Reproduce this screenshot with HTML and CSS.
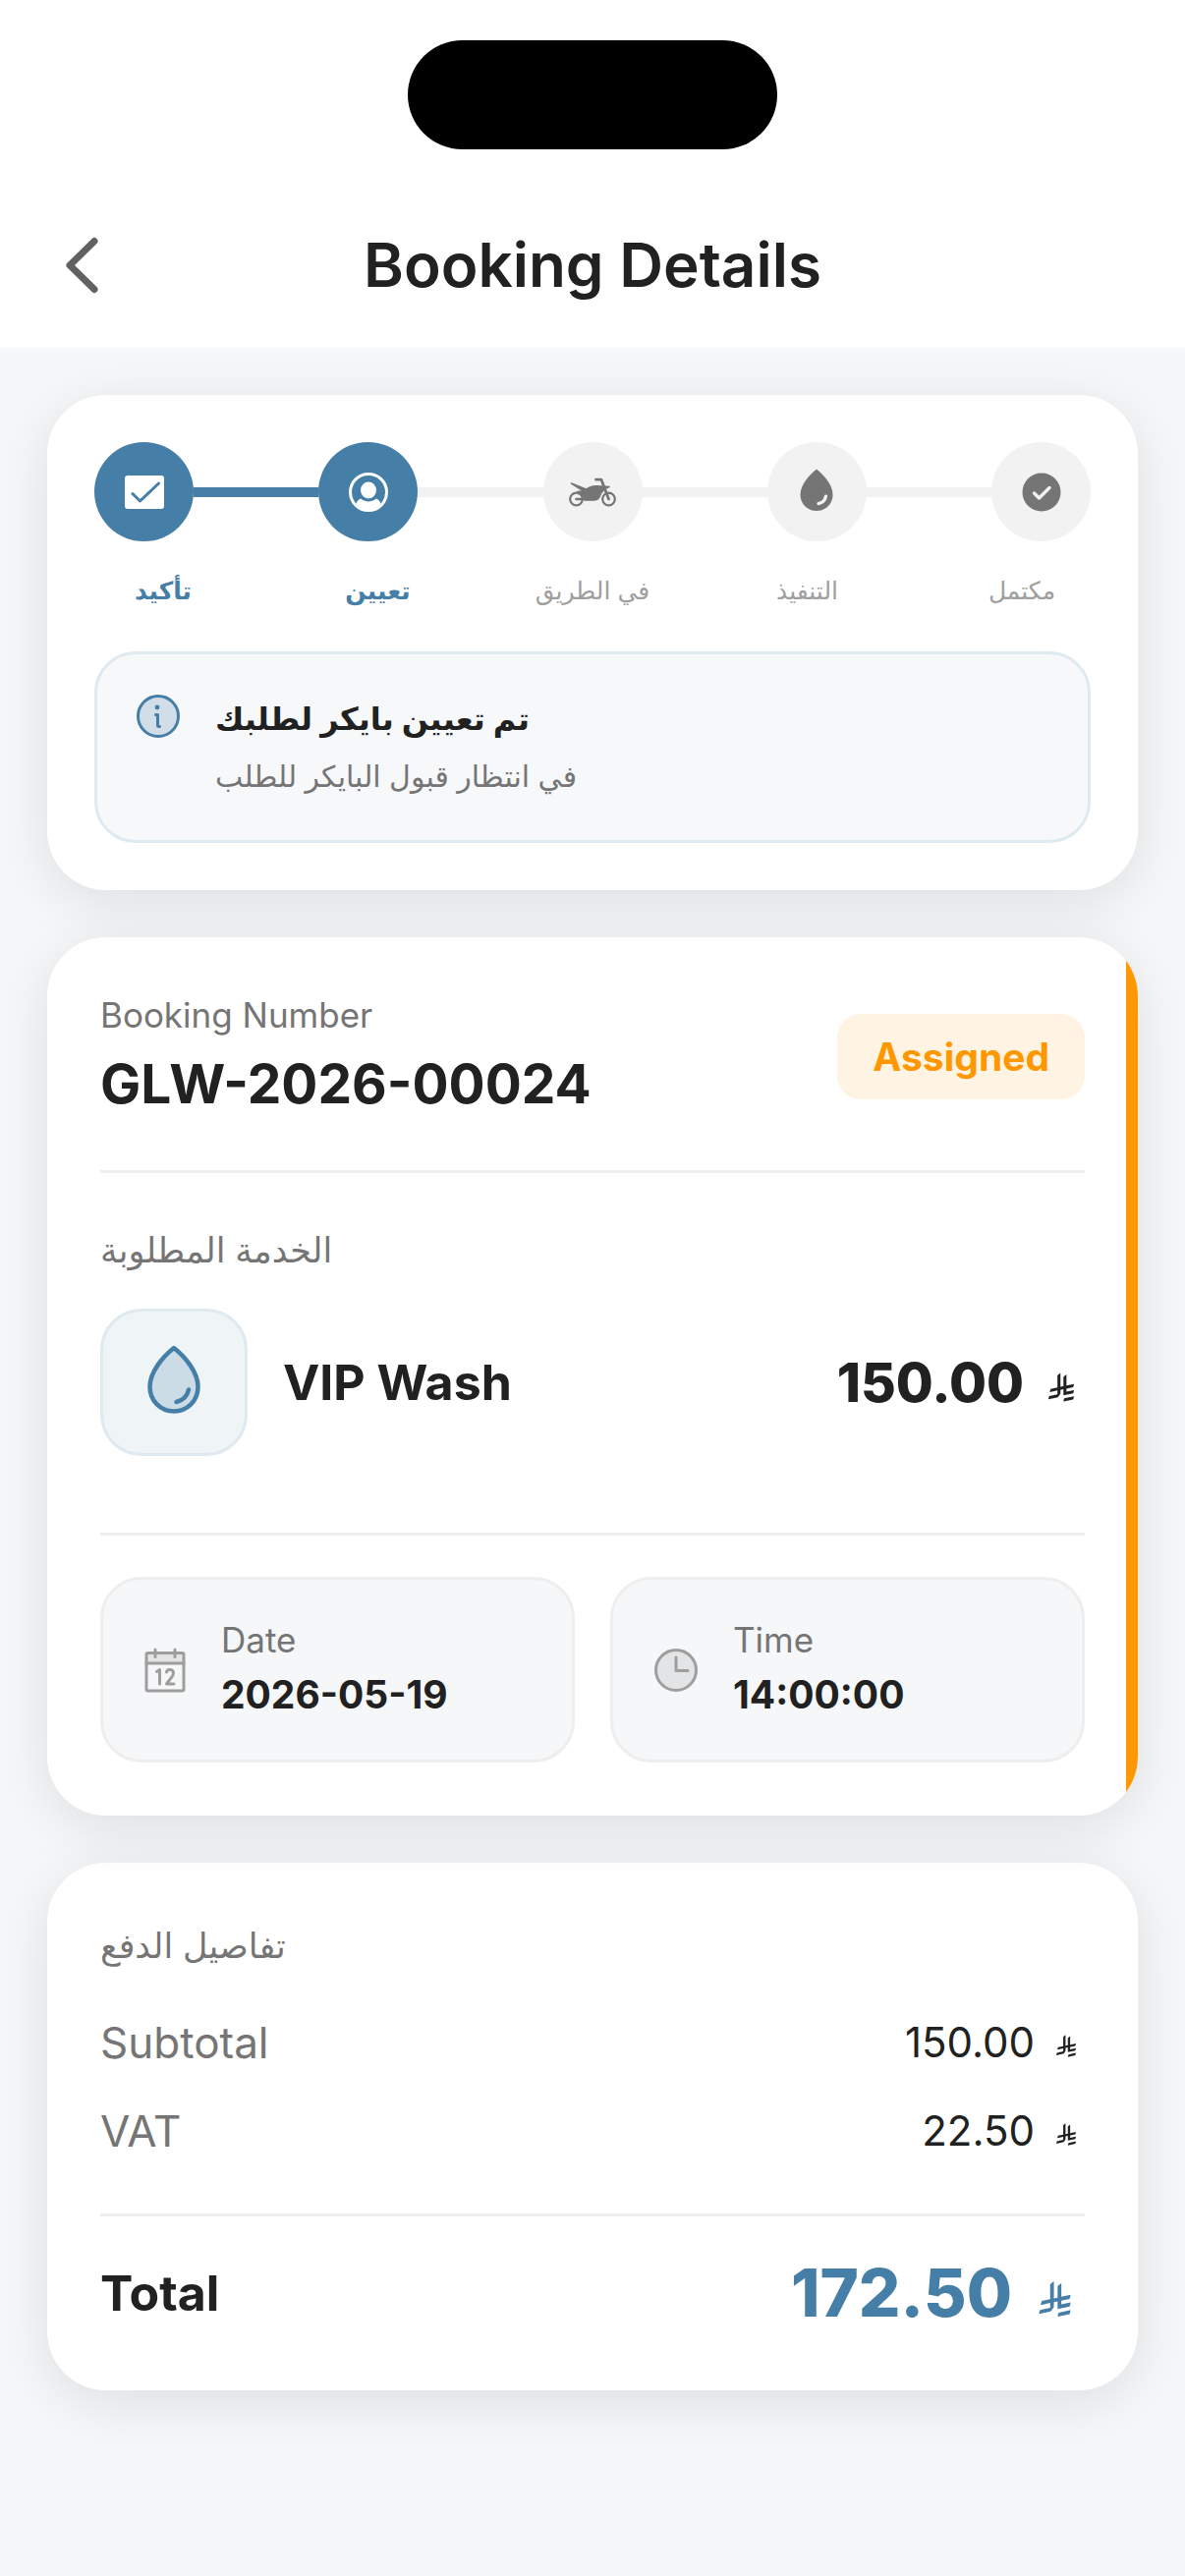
FILE: index.html
```html
<!DOCTYPE html>
<html lang="en">
<head>
    <meta charset="UTF-8">
    <meta name="viewport" content="width=device-width, initial-scale=1.0">
    <title>Booking Details</title>
    <link rel="stylesheet" href="styles.css">
</head>
<body>
    <!-- Shared symbols -->
    <svg class="sprite" aria-hidden="true">
        <symbol id="riyal" viewBox="0 0 1124 1256">
            <path d="M699.62,1113.02c-20.06,44.48-33.32,92.75-38.4,143.37l424.51-90.24c20.06-44.47,33.31-92.75,38.4-143.37l-424.51,90.24Z"/>
            <path d="M1085.73,895.8c20.06-44.47,33.32-92.75,38.4-143.37l-330.68,70.33v-135.2l292.27-62.11c20.06-44.47,33.32-92.75,38.4-143.37l-330.68,70.27V66.13c-50.67,28.45-95.67,66.32-132.25,110.99v403.35l-132.25,28.11V0c-50.67,28.44-95.67,66.32-132.25,110.99v525.69l-295.91,62.88c-20.06,44.47-33.33,92.75-38.42,143.37l334.33-71.05v170.26l-358.3,76.14c-20.06,44.47-33.32,92.75-38.4,143.37l375.04-79.7c30.53-6.35,56.77-24.4,73.83-49.24l68.78-101.97c7.14-10.55,11.3-23.27,11.3-36.97v-149.98l132.25-28.11v270.4l424.53-90.28Z"/>
        </symbol>
    </svg>

    <header class="header">
        <div class="status-bar">
            <div class="island"></div>
        </div>
        <div class="nav-bar">
            <button class="back-btn" type="button" aria-label="Back">
                <svg width="36" height="60" viewBox="0 0 36 60" fill="none" stroke="currentColor" stroke-width="7" stroke-linecap="round" stroke-linejoin="round">
                    <path d="M30 5.500L5 30L30 54.500"/>
                </svg>
            </button>
            <h1>Booking Details</h1>
        </div>
    </header>

    <main class="content">
        <!-- Progress -->
        <section class="card status-card">
            <div class="steps">
                <div class="step done">
                    <svg width="40" height="34" viewBox="0 0 40 34">
                        <rect width="40" height="34" rx="3" fill="currentColor"/>
                        <path d="M8 18.500L15.500 26L34.500 8" fill="none" stroke="#457ea6" stroke-width="3" stroke-linecap="round" stroke-linejoin="round"/>
                    </svg>
                </div>
                <div class="line done"></div>
                <div class="step done">
                    <svg width="40" height="40" viewBox="0 0 40 40">
                        <circle cx="20" cy="20" r="18.500" fill="none" stroke="currentColor" stroke-width="3"/>
                        <ellipse cx="20" cy="18" rx="8" ry="8.500" fill="currentColor"/>
                        <path d="M7.500 31.500C8.500 29 10 27.500 12 26.500C16.500 30.500 23.500 30.500 28 26.500C30 27.500 31.500 29 32.500 31.500C29 35.500 25 38 20 38C15 38 11 35.500 7.500 31.500Z" fill="currentColor"/>
                    </svg>
                </div>
                <div class="line"></div>
                <div class="step">
                    <svg width="48" height="30" viewBox="0 0 48 30" fill="none" stroke="currentColor" stroke-width="2.200" stroke-linecap="round" stroke-linejoin="round">
                        <circle cx="7.500" cy="22" r="6.300"/>
                        <circle cx="40.500" cy="22" r="6.300"/>
                        <path d="M7.500 22H25" stroke-width="2.600"/>
                        <path d="M27.500 2.200H33L40.500 22" stroke-width="2.800"/>
                        <path d="M2.500 6L18 12.200C21 9.500 24 8.600 28 8.800L41 9.600C35 11.500 33 15 31.500 18.500C30.500 21.500 29 23 26 23H16C15.500 19 13 16 9 14.500C12 14 14 14 16 14.500Z" fill="currentColor" stroke-width="1.600"/>
                    </svg>
                </div>
                <div class="line"></div>
                <div class="step">
                    <svg width="34" height="48" viewBox="0 0 34 48">
                        <path d="M17 0.500C9.500 6.500 0.500 16.500 0.500 26.500C0.500 36 8 43 17 43S33.500 36 33.500 26.500C33.500 16.500 24.500 6.500 17 0.500Z" fill="currentColor"/>
                        <path d="M26.500 28C25.800 32 23 34.800 19 35.600" fill="none" stroke="#f2f2f2" stroke-width="3.200" stroke-linecap="round"/>
                    </svg>
                </div>
                <div class="line"></div>
                <div class="step">
                    <svg width="40" height="40" viewBox="0 0 40 40">
                        <circle cx="20" cy="20" r="19.500" fill="currentColor"/>
                        <path d="M12.500 21L17.500 26L28 15.500" fill="none" stroke="#f2f2f2" stroke-width="3.400" stroke-linecap="round" stroke-linejoin="round"/>
                    </svg>
                </div>
            </div>
            <div class="step-labels" lang="ar">
                <span class="active">تأكيد</span>
                <span class="active">تعيين</span>
                <span>في الطريق</span>
                <span>التنفيذ</span>
                <span>مكتمل</span>
            </div>
            <div class="info-box">
                <svg class="info-icon" width="44" height="44" viewBox="0 0 44 44" fill="none" stroke="#457ea6" stroke-width="3" stroke-linecap="round" stroke-linejoin="round">
                    <circle cx="22" cy="22" r="20.500" fill="#d1dee8"/>
                    <path d="M19.500 20.500H21.500V31.500Q21.500 32.500 23.500 32.500"/>
                    <circle cx="21" cy="13" r="2.400" fill="#457ea6" stroke="none"/>
                </svg>
                <div lang="ar">
                    <p class="info-title">تم تعيين بايكر لطلبك</p>
                    <p class="info-text">في انتظار قبول البايكر للطلب</p>
                </div>
            </div>
        </section>

        <!-- Booking -->
        <section class="card booking-card">
            <div class="row">
                <div>
                    <p class="label">Booking Number</p>
                    <p class="booking-number">GLW-2026-00024</p>
                </div>
                <span class="badge">Assigned</span>
            </div>
            <hr class="divider">
            <h2 class="section-title" lang="ar">الخدمة المطلوبة</h2>
            <div class="row service">
                <div class="service-icon">
                    <svg width="54" height="76" viewBox="0 0 54 76" fill="none" stroke="#457ea6" stroke-width="4.500" stroke-linecap="round" stroke-linejoin="round">
                        <path d="M27 3C15 12.500 2.500 28 2.500 42.500C2.500 57 13.500 67.500 27 67.500S51.500 57 51.500 42.500C51.500 28 39 12.500 27 3Z" fill="#ccdce7"/>
                        <path d="M42 45.500C40.500 52 36.500 56.500 29.500 58"/>
                    </svg>
                </div>
                <span class="service-name">VIP Wash</span>
                <span class="price">150.00<svg class="riyal" role="img" aria-label="SAR"><use href="#riyal"/></svg></span>
            </div>
            <hr class="divider tight">
            <div class="slots">
                <div class="slot">
                    <svg width="42" height="46" viewBox="0 0 42 46" fill="none" stroke="#9e9e9e" stroke-width="3" stroke-linecap="round" stroke-linejoin="round">
                        <path d="M2 5.500H40V16H2Z" fill="#e2e4e5" stroke="none"/>
                        <rect x="2" y="5.500" width="38" height="38.500" rx="1.500"/>
                        <path d="M2 16H40M11 2V9.500M31 2V9.500"/>
                        <path d="M12.500 24.500L15.500 22.500V37M22.500 25C23 21.500 29.500 21.500 29.500 26C29.500 29.500 24 34 22.500 37H30"/>
                    </svg>
                    <div>
                        <p class="label">Date</p>
                        <p class="slot-value">2026-05-19</p>
                    </div>
                </div>
                <div class="slot">
                    <svg width="44" height="46" viewBox="0 0 44 46" fill="none" stroke="#9e9e9e" stroke-width="3" stroke-linecap="round" stroke-linejoin="round">
                        <circle cx="22" cy="23" r="20.500" fill="#e2e4e5"/>
                        <path d="M22 10V23.500H34"/>
                    </svg>
                    <div>
                        <p class="label">Time</p>
                        <p class="slot-value">14:00:00</p>
                    </div>
                </div>
            </div>
        </section>

        <!-- Payment -->
        <section class="card payment-card">
            <h2 class="section-title" lang="ar">تفاصيل الدفع</h2>
            <div class="row amount-row">
                <span class="amount-label">Subtotal</span>
                <span class="amount">150.00<svg class="riyal" role="img" aria-label="SAR"><use href="#riyal"/></svg></span>
            </div>
            <div class="row amount-row">
                <span class="amount-label">VAT</span>
                <span class="amount">22.50<svg class="riyal" role="img" aria-label="SAR"><use href="#riyal"/></svg></span>
            </div>
            <hr class="divider total-divider">
            <div class="row total-row">
                <span class="total-label">Total</span>
                <span class="total">172.50<svg class="riyal" role="img" aria-label="SAR"><use href="#riyal"/></svg></span>
            </div>
        </section>
    </main>
</body>
</html>
```

FILE: styles.css
```css
:root {
    --primary: #457ea6;
    --primary-border: #dfe9f0;
    --orange: #ff9800;
    --bg: #f5f7f9;
    --dark: #212121;
    --gray: #757575;
    --light-gray: #9e9e9e;
    --border: #eeeeee;
}

* {
    margin: 0;
    padding: 0;
    box-sizing: border-box;
}

body {
    font-family: Inter, 'DejaVu Sans', sans-serif;
    background-color: var(--bg);
    color: var(--dark);
    min-height: 100vh;
}

svg {
    display: block;
    flex-shrink: 0;
}

.sprite {
    display: none;
}

/* Header */
.header {
    background-color: white;
}

.status-bar {
    padding: 41px 0 34px;
}

.island {
    width: 376px;
    height: 111px;
    margin: 0 auto;
    border-radius: 56px;
    background-color: black;
}

.nav-bar {
    display: grid;
    grid-template-columns: 102px 1fr 102px;
    align-items: center;
    height: 168px;
}

.back-btn {
    justify-self: end;
    background: none;
    border: none;
    color: #616161;
    cursor: pointer;
}

h1 {
    font-size: 62px;
    font-weight: 600;
    line-height: 84px;
    text-align: center;
}

/* Cards */
.content {
    display: flex;
    flex-direction: column;
    gap: 48px;
    padding: 48px;
}

.card {
    background-color: white;
    border-radius: 60px;
    padding: 54px;
    box-shadow: 0 12px 60px rgba(0, 0, 0, 0.1);
}

.row {
    display: flex;
    align-items: center;
    justify-content: space-between;
}

.divider {
    border: none;
    height: 3px;
    background-color: var(--border);
    margin: 48px 0;
}

.divider.tight {
    margin-bottom: 42px;
}

.label {
    font-size: 35px;
    line-height: 50px;
    color: var(--gray);
}

.section-title {
    font-size: 35px;
    font-weight: 400;
    line-height: 60px;
    color: var(--gray);
    margin-bottom: 30px;
}

/* Progress */
.status-card {
    padding: 48px;
}

.steps {
    display: flex;
    align-items: center;
}

.step {
    display: flex;
    align-items: center;
    justify-content: center;
    width: 101px;
    height: 101px;
    border-radius: 50%;
    background-color: #f2f2f2;
    color: var(--gray);
}

.step.done {
    background-color: var(--primary);
    color: white;
}

.line {
    flex: 1;
    height: 10px;
    background-color: #f2f2f2;
}

.line.done {
    background-color: var(--primary);
}

.step-labels {
    display: flex;
    justify-content: space-between;
    margin: 26px 0 38px;
    font-size: 25px;
    line-height: 48px;
    color: var(--light-gray);
}

.step-labels span {
    width: 140px;
    text-align: center;
    white-space: nowrap;
}

.step-labels .active {
    color: var(--primary);
    font-weight: 600;
}

.info-box {
    display: flex;
    gap: 36px;
    padding: 36px 40px;
    border: 3px solid var(--primary-border);
    border-radius: 42px;
    background-color: #f7f8fa;
}

.info-icon {
    margin-top: 5px;
}

.info-title {
    font-size: 32px;
    font-weight: 600;
    line-height: 60px;
}

.info-text {
    font-size: 30px;
    line-height: 57px;
    color: var(--gray);
}

/* Booking */
.booking-card {
    position: relative;
    overflow: hidden;
}

.booking-card::after {
    content: '';
    position: absolute;
    top: 0;
    right: 0;
    bottom: 0;
    width: 12px;
    background-color: var(--orange);
}

.booking-number {
    margin-top: 5px;
    font-size: 55px;
    font-weight: 700;
    line-height: 80px;
}

.badge {
    padding: 0 36px;
    border-radius: 24px;
    background-color: #fff4e3;
    color: var(--orange);
    font-size: 39px;
    font-weight: 700;
    line-height: 87px;
}

.service {
    gap: 36px;
    padding-bottom: 30px;
}

.service-icon {
    display: flex;
    align-items: center;
    justify-content: center;
    width: 150px;
    height: 150px;
    border: 3px solid var(--primary-border);
    border-radius: 42px;
    background-color: #eff4f7;
}

.service-name {
    flex: 1;
    font-size: 50px;
    font-weight: 700;
}

.price,
.amount,
.total {
    display: inline-flex;
    align-items: baseline;
}

.riyal {
    width: 26px;
    height: 30px;
    margin: 0 11px 0 25px;
    fill: currentColor;
}

.price {
    font-size: 55px;
    font-weight: 800;
}

.slots {
    display: grid;
    grid-template-columns: 1fr 1fr;
    gap: 36px;
}

.slot {
    display: flex;
    align-items: center;
    gap: 36px;
    padding: 36px 42px;
    border: 3px solid var(--border);
    border-radius: 42px;
    background-color: #f6f7f9;
}

.slot-value {
    font-size: 39px;
    font-weight: 700;
    line-height: 61px;
}

/* Payment */
.amount-row {
    line-height: 78px;
    margin-bottom: 12px;
}

.amount-label {
    font-size: 44px;
    color: var(--gray);
}

.amount {
    font-size: 42px;
}

.amount .riyal {
    width: 20px;
    height: 23px;
    margin: 0 9px 0 22px;
}

.total-divider {
    margin: 45px 0 33px;
}

.total-row {
    line-height: 90px;
}

.total-label {
    font-size: 50px;
    font-weight: 700;
}

.total {
    font-size: 67px;
    font-weight: 800;
    color: var(--primary);
}

.total .riyal {
    width: 33px;
    height: 36px;
    margin: 0 14px 0 27px;
}
```
